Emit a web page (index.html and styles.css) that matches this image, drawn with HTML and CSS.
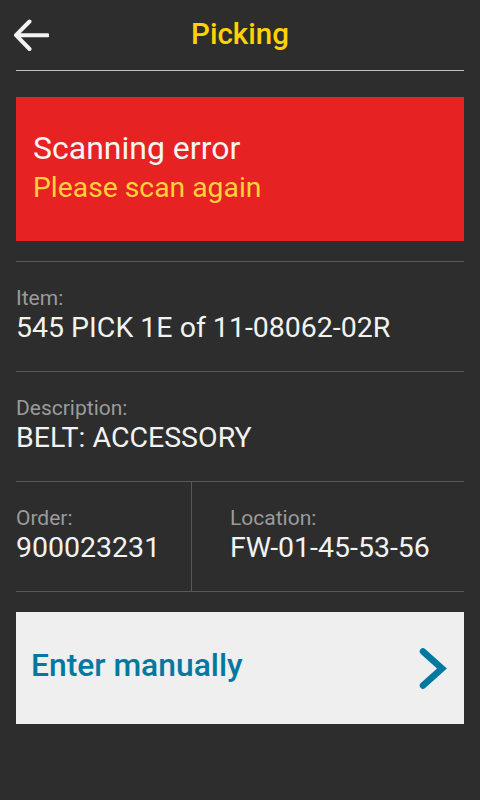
FILE: index.html
```html
<!DOCTYPE html>
<html lang="en">
<head>
    <meta charset="UTF-8">
    <meta name="viewport" content="width=device-width, initial-scale=1.0">
    <title>Picking</title>
    <link rel="stylesheet" href="styles.css">
</head>
<body>
    <div class="screen">
        <header class="top-bar">
            <button class="back-btn" aria-label="Back">
                <svg width="36" height="36" viewBox="0 0 36 36">
                    <path d="M16.5 5.5 L3 19.2 L16.5 33 M3.5 19.2 H34.5" fill="none" stroke="#f2f2f2" stroke-width="4" stroke-linecap="round" stroke-linejoin="round"/>
                </svg>
            </button>
            <h1>Picking</h1>
        </header>

        <div class="error-box">
            <div class="error-title">Scanning error</div>
            <div class="error-text">Please scan again</div>
        </div>

        <div class="info-row">
            <div class="field">
                <div class="label">Item:</div>
                <div class="value">545 PICK 1E of 11-08062-02R</div>
            </div>
        </div>

        <div class="info-row">
            <div class="field">
                <div class="label">Description:</div>
                <div class="value">BELT: ACCESSORY</div>
            </div>
        </div>

        <div class="info-row split">
            <div class="field">
                <div class="label">Order:</div>
                <div class="value">900023231</div>
            </div>
            <div class="field">
                <div class="label">Location:</div>
                <div class="value">FW-01-45-53-56</div>
            </div>
        </div>

        <button class="manual-btn">
            <span>Enter manually</span>
            <svg width="34" height="48" viewBox="0 0 34 48">
                <path d="M7 7.5 L26 24.5 L7 41.5" fill="none" stroke="#0079a1" stroke-width="6.5" stroke-linecap="round" stroke-linejoin="miter"/>
            </svg>
        </button>
    </div>
</body>
</html>
```

FILE: styles.css
```css
body {
    margin: 0;
    padding: 0;
    background-color: #2d2d2d;
    font-family: Roboto, "Noto Sans", sans-serif;
    color: #f2f2f2;
}

.screen {
    padding: 0 16px;
}

.top-bar {
    position: relative;
    height: 67px;
    padding-bottom: 3px;
    border-bottom: 1px solid #c4c4c4;
    display: flex;
    align-items: center;
    justify-content: center;
}

.back-btn {
    position: absolute;
    left: -3px;
    top: 16px;
    padding: 0;
    background: none;
    border: none;
    cursor: pointer;
}

.back-btn svg {
    display: block;
}

.top-bar h1 {
    margin: 0;
    font-size: 29.5px;
    font-weight: 500;
    color: #ffd200;
}

.error-box {
    margin-top: 26px;
    height: 144px;
    box-sizing: border-box;
    background-color: #e62222;
    padding: 33px 17px 0;
}

.error-title {
    font-size: 32px;
    line-height: 36px;
    color: #f4f4f4;
}

.error-text {
    font-size: 28.3px;
    line-height: 44px;
    color: #fdd23a;
}

.info-row {
    height: 109px;
    border-bottom: 1px solid #595959;
}

.error-box + .info-row {
    margin-top: 20px;
    border-top: 1px solid #595959;
}

.field {
    padding-top: 24px;
}

.label {
    font-size: 21px;
    line-height: 24px;
    color: #9b9b9b;
}

.value {
    font-size: 28.5px;
    line-height: 36px;
    color: #f2f2f2;
}

.info-row.split {
    display: grid;
    grid-template-columns: 175px 1fr;
}

.info-row.split .field + .field {
    border-left: 1px solid #595959;
    padding-left: 38px;
}

.manual-btn {
    margin-top: 20px;
    width: 100%;
    height: 112px;
    background-color: #efefef;
    border: none;
    padding: 0 14px 6px 15px;
    display: flex;
    align-items: center;
    justify-content: space-between;
    font-family: inherit;
    font-size: 31.8px;
    font-weight: 500;
    color: #0079a1;
    cursor: pointer;
}

.manual-btn svg {
    display: block;
    margin-bottom: -6px;
}
```
